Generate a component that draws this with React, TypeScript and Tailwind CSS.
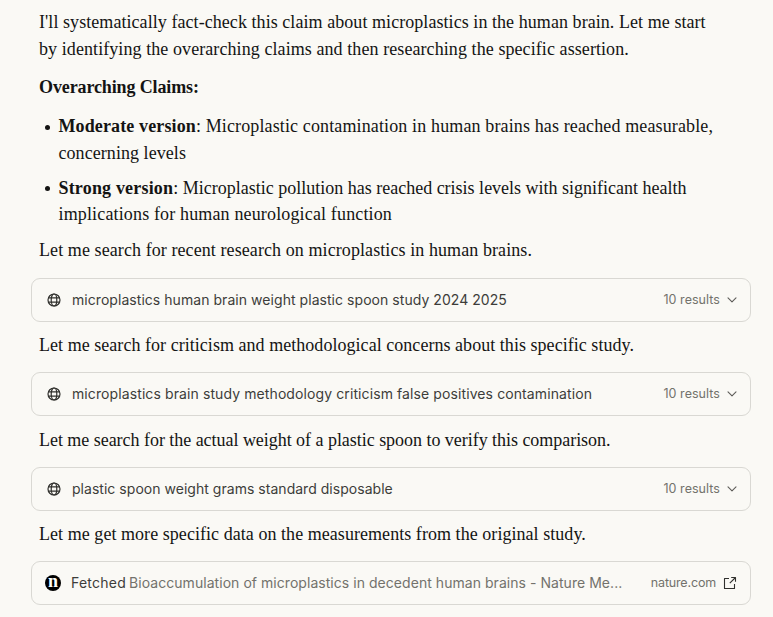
import type { ReactNode } from "react";

function GlobeIcon() {
  return (
    <svg width="14" height="14" viewBox="0 0 14 14" fill="none" stroke="#30302d" strokeWidth="1.2" className="ml-[1px] shrink-0">
      <circle cx="7" cy="7" r="6" />
      <ellipse cx="7" cy="7" rx="2.8" ry="6" />
      <path d="M1.5 4.9h11M1.5 9.1h11" />
    </svg>
  );
}

function ChevronIcon() {
  return (
    <svg width="10" height="6" viewBox="0 0 10 6" fill="none" stroke="#5e5d59" strokeWidth="1.1" strokeLinecap="round" strokeLinejoin="round">
      <path d="M1 .8 5 4.8 9 .8" />
    </svg>
  );
}

function ExternalIcon() {
  return (
    <svg width="14" height="14" viewBox="0 0 14 14" fill="none" stroke="#30302d" strokeWidth="1.1" strokeLinejoin="round">
      <path d="M6 2.5H1.5v10h10V8M8.2 1.5h4.3v4.3M12.5 1.5 6.8 7.2" />
    </svg>
  );
}

function NatureLogo() {
  return (
    <span className="-ml-px flex h-4 w-4 shrink-0 items-center justify-center rounded-full bg-black font-['Liberation_Serif',serif] text-[18px] font-bold leading-none text-white">
      <span className="-mt-[3px]">n</span>
    </span>
  );
}

function Card({ children }: { children: ReactNode }) {
  return (
    <div className="-mx-2 flex h-11 w-[720px] items-center whitespace-nowrap rounded-[9px] border border-[#d9d8d3] pl-[14px] pr-[13px] font-['Inter',sans-serif] text-[14px] leading-5 text-[#3d3d3a]">
      {children}
    </div>
  );
}

function SearchCard({ query, tracking }: { query: string; tracking: string }) {
  return (
    <Card>
      <GlobeIcon />
      <span className={`ml-[11px] ${tracking}`}>{query}</span>
      <span className="ml-auto mr-[7px] text-[12.5px] tracking-[0.05px] text-[#73726c]">10 results</span>
      <ChevronIcon />
    </Card>
  );
}

function Bullet({ children }: { children: ReactNode }) {
  return (
    <li className="flex">
      <span className="ml-[6px] mr-[8.5px] mt-[11.5px] h-[5px] w-[5px] shrink-0 rounded-full bg-[#141413]" />
      <p>{children}</p>
    </li>
  );
}

export default function App() {
  return (
    <main className="h-[617px] w-full overflow-hidden whitespace-nowrap bg-[#faf9f5] pl-[39px] pt-[9.3px] font-['Liberation_Serif',serif] text-[18px] leading-[26.5px] text-[#141413]">
      <p>
        <span className="tracking-[0.06px]">I'll systematically fact-check this claim about microplastics in the human brain. Let me start</span>
        <br />
        <span className="tracking-[0.08px]">by identifying the overarching claims and then researching the specific assertion.</span>
      </p>
      <p className="mt-[11.8px] font-bold tracking-[-0.12px]">Overarching Claims:</p>
      <ul className="mt-[12.5px] flex flex-col gap-[8.8px]">
        <Bullet>
          <b className="tracking-[0.12px]">Moderate version</b>
          <span className="tracking-[0.13px]">: Microplastic contamination in human brains has reached measurable,</span>
          <br />
          <span className="tracking-[0.06px]">concerning levels</span>
        </Bullet>
        <Bullet>
          <b className="tracking-[0.18px]">Strong version</b>
          <span>: Microplastic pollution has reached crisis levels with significant health</span>
          <br />
          <span className="tracking-[0.15px]">implications for human neurological function</span>
        </Bullet>
      </ul>
      <p className="mb-[14.7px] mt-[9px] tracking-[0.085px]">Let me search for recent research on microplastics in human brains.</p>
      <SearchCard query="microplastics human brain weight plastic spoon study 2024 2025" tracking="tracking-[0.05px]" />
      <p className="mb-[13.6px] mt-[10.2px] tracking-[0.04px]">Let me search for criticism and methodological concerns about this specific study.</p>
      <SearchCard query="microplastics brain study methodology criticism false positives contamination" tracking="tracking-[0.1px]" />
      <p className="mb-[13.6px] mt-[10.2px] tracking-[-0.035px]">Let me search for the actual weight of a plastic spoon to verify this comparison.</p>
      <SearchCard query="plastic spoon weight grams standard disposable" tracking="tracking-[0.03px]" />
      <p className="mb-[13.6px] mt-[10.2px] tracking-[0.05px]">Let me get more specific data on the measurements from the original study.</p>
      <Card>
        <NatureLogo />
        <span className="ml-[10px] tracking-[0.25px]">Fetched</span>
        <span className="ml-[3px] tracking-[0.045px] text-[#73726c]">Bioaccumulation of microplastics in decedent human brains - Nature Me...</span>
        <span className="ml-auto mr-[7px] text-[12.5px] tracking-[-0.17px] text-[#73726c]">nature.com</span>
        <ExternalIcon />
      </Card>
    </main>
  );
}
